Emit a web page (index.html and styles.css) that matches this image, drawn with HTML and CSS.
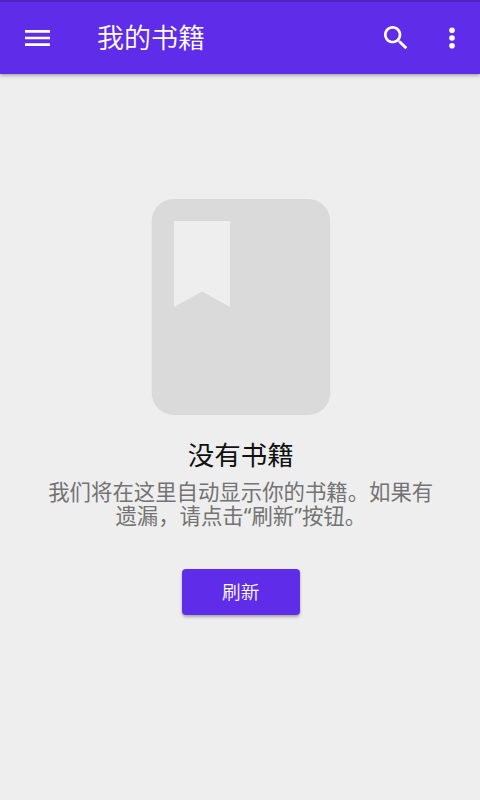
FILE: index.html
```html
<!DOCTYPE html>
<html lang="zh-CN">
<head>
<meta charset="utf-8">
<title>我的书籍</title>
<link rel="stylesheet" href="styles.css">
</head>
<body>
<header class="bar">
  <svg class="menu" viewBox="0 0 25 16" width="25" height="16"><path d="M0 0h25v2.7H0zM0 6.65h25v2.7H0zM0 13.3h25V16H0z"/></svg>
  <h1 class="title">我的书籍</h1>
  <svg class="search" viewBox="0 0 24 24" width="32" height="32"><path d="M15.5 14h-.79l-.28-.27C15.41 12.59 16 11.11 16 9.5 16 5.91 13.09 3 9.5 3S3 5.91 3 9.5 5.91 16 9.5 16c1.61 0 3.09-.59 4.23-1.57l.27.28v.79l5 4.99L20.49 19l-4.99-5zm-6 0C7.01 14 5 11.99 5 9.5S7.01 5 9.5 5 14 7.01 14 9.5 11.99 14 9.5 14z"/></svg>
  <svg class="more" viewBox="0 0 6 22" width="6" height="22"><circle cx="3" cy="3.200" r="2.8"/><circle cx="3" cy="11" r="2.8"/><circle cx="3" cy="18.800" r="2.8"/></svg>
</header>
<main class="empty">
  <svg class="book" viewBox="-.7 0 180 216" width="180" height="216"><path fill-rule="evenodd" d="M22 0H156.500a22 22 0 0 1 22 22V194a22 22 0 0 1-22 22H22a22 22 0 0 1-22-22V22A22 22 0 0 1 22 0zM22.300 22V108L50.300 92.500 78.300 108V22z"/></svg>
  <h2 class="heading">没有书籍</h2>
  <p class="message">我们将在这里自动显示你的书籍。如果有<br>遗漏，请点击“刷新”按钮。</p>
  <button class="refresh">刷新</button>
</main>
</body>
</html>
```
FILE: styles.css
```css
* { box-sizing: border-box; }
body {
  margin: 0;
  height: 800px;
  overflow: hidden;
  background: #eee;
  font-family: "Noto Sans", "Noto Sans CJK SC", sans-serif;
}
.bar {
  height: 74px;
  display: flex;
  align-items: center;
  padding: 0 25px 0;
  background: #5f2cea;
  border-top: 2px solid #4e25c4;
  box-shadow: 0 1px 4px rgba(0, 0, 0, .4);
  fill: #fff;
  color: #fff;
}
.title { margin: 0 0 0 47px; font-size: 27px; line-height: 36px; font-weight: 350; }
.search { margin-left: auto; }
.more { margin: 0 0 0 37px; }
.empty { display: flex; flex-direction: column; align-items: center; padding: 125px 0 0 1.5px; }
.book { fill: #dadada; }
.heading { margin: 20px 0 0; font-size: 26.5px; line-height: 40px; font-weight: 400; color: #111; }
.message { margin: 5px 0 0; font-size: 21.4px; line-height: 24px; font-weight: 400; text-align: center; color: #737373; white-space: nowrap; }
.refresh {
  margin-top: 41px;
  width: 118px;
  height: 46px;
  border: 0;
  border-radius: 4px;
  background: #5f2cea;
  color: #fff;
  font: 350 18.7px/46px "Noto Sans", "Noto Sans CJK SC", sans-serif;
  padding: 0;
  box-shadow: 0 2px 3px rgba(0, 0, 0, .3);
}
```
